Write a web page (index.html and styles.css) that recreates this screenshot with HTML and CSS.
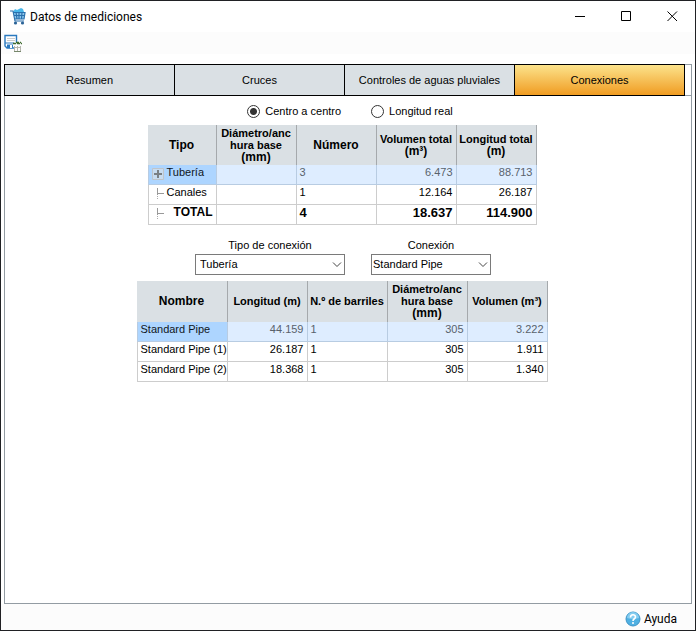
FILE: index.html
```html
<!DOCTYPE html>
<html lang="es">
<head>
    <meta charset="UTF-8">
    <meta name="viewport" content="width=device-width, initial-scale=1.0">
    <title>Datos de mediciones</title>
    <link rel="stylesheet" href="styles.css">
</head>
<body>
    <div class="window">
        <header class="titlebar">
            <svg class="app-icon" width="18" height="18" viewBox="0 0 18 18" fill="none">
                <path d="M4 4 L6 1 L8 2 L12 0 L14 1 L15 4 Z" fill="#49b7ea"/>
                <path d="M4 4 H16 L15 11 H6 Z" fill="#8cc6ec"/>
                <path d="M1 3 H4 L6 13 H15 M4 4.500 H16 L15 11 H6 M5 7.500 H16 M7 4 L8 11 M10 4 V11 M13 4 L12.500 11" stroke="#2a70ad" stroke-width="1.200"/>
                <circle cx="6.500" cy="15" r="1.600" fill="#2b6397"/>
                <circle cx="13.500" cy="15" r="1.600" fill="#2b6397"/>
            </svg>
            <h1>Datos de mediciones</h1>
            <div class="window-buttons">
                <button type="button" aria-label="Minimizar">
                    <svg width="11" height="11" viewBox="0 0 11 11"><path d="M0 5.500H10" stroke="#000"/></svg>
                </button>
                <button type="button" aria-label="Maximizar">
                    <svg width="11" height="11" viewBox="0 0 11 11"><path d="M.5.5H9.500V9.500H.5Z" fill="none" stroke="#000"/></svg>
                </button>
                <button type="button" aria-label="Cerrar">
                    <svg width="11" height="11" viewBox="0 0 11 11"><path d="M.5.5L10 10M10 .5L.5 10" stroke="#000"/></svg>
                </button>
            </div>
        </header>

        <div class="toolbar">
            <button type="button" aria-label="Guardar">
                <svg width="18" height="19" viewBox="0 0 18 19" fill="none">
                    <path d="M1 1.500H12.500V14H3L1 12Z" fill="#fff" stroke="#2a79bf" stroke-width="1.400"/>
                    <path d="M3 4.500H11M3 6.500H11" stroke="#ccc"/>
                    <path d="M1 8.500H12V9.500H1Z" fill="#2a79bf"/>
                    <path d="M3 10.500H9V14H3Z" fill="#2a79bf"/>
                    <path d="M6 11H8V14H6Z" fill="#fff"/>
                    <path d="M10 8H18V19H10Z" fill="#fcfcfc"/>
                    <path d="M9 9.500H18M12 8.500H17" stroke="#3f6b2f" stroke-width="1.500" stroke-dasharray="3 1"/>
                    <path d="M10.500 12V17.500H16.500V12M13.500 12V17M10 13.500H17" stroke="#b5b5ad"/>
                    <path d="M10 17.500H17" stroke="#76876b"/>
                </svg>
            </button>
        </div>

        <main class="tab-control">
            <nav class="tabs" role="tablist">
                <button type="button" role="tab">Resumen</button>
                <button type="button" role="tab">Cruces</button>
                <button type="button" role="tab">Controles de aguas pluviales</button>
                <button type="button" role="tab" class="active" aria-selected="true">Conexiones</button>
            </nav>

            <section class="panel">
                <div class="radios">
                    <label><input type="radio" name="longitud" checked>Centro a centro</label>
                    <label><input type="radio" name="longitud">Longitud real</label>
                </div>

                <table class="grid">
                    <colgroup><col class="col-tipo"><col><col><col><col></colgroup>
                    <thead>
                        <tr>
                            <th class="big">Tipo</th>
                            <th>Diámetro/anc<br>hura base<br><span class="big">(mm)</span></th>
                            <th class="big">Número</th>
                            <th>Volumen total<br><span class="big">(m³)</span></th>
                            <th>Longitud total<br><span class="big">(m)</span></th>
                        </tr>
                    </thead>
                    <tbody>
                        <tr class="selected">
                            <td>
                                <div class="tree">
                                    <svg width="13" height="13" viewBox="0 0 13 13" fill="none"><path d="M.5 1.500H11.500V12.500H.5Z" fill="#c8dcf0" stroke="#bfc4ca"/><path d="M2 7H10M6 3V11" stroke="#7b8084" stroke-width="2"/></svg>
                                    Tubería
                                </div>
                            </td>
                            <td></td>
                            <td>3</td>
                            <td class="num">6.473</td>
                            <td class="num">88.713</td>
                        </tr>
                        <tr>
                            <td>
                                <div class="tree">
                                    <svg width="13" height="13" viewBox="0 0 13 13" fill="none"><path d="M5.500 1V8M5.500 6.500H12" stroke="#999"/><path d="M5.500 9V12" stroke="#aaa" stroke-dasharray="1 1"/></svg>
                                    Canales
                                </div>
                            </td>
                            <td></td>
                            <td>1</td>
                            <td class="num">12.164</td>
                            <td class="num">26.187</td>
                        </tr>
                        <tr class="total">
                            <td>
                                <div class="tree">
                                    <svg width="13" height="13" viewBox="0 0 13 13" fill="none"><path d="M5.500 1V8M5.500 6.500H12" stroke="#999"/><path d="M5.500 9V12" stroke="#aaa" stroke-dasharray="1 1"/></svg>
                                    <span>TOTAL</span>
                                </div>
                            </td>
                            <td></td>
                            <td>4</td>
                            <td class="num">18.637</td>
                            <td class="num">114.900</td>
                        </tr>
                    </tbody>
                </table>

                <div class="filters">
                    <div class="field field-tipo">
                        <label for="tipo">Tipo de conexión</label>
                        <div class="select">
                            <select id="tipo"><option>Tubería</option></select>
                            <svg width="10" height="6" viewBox="0 0 10 6"><path d="M1 .5L5 4.500L9 .5" fill="none" stroke="#444"/></svg>
                        </div>
                    </div>
                    <div class="field field-conexion">
                        <label for="conexion">Conexión</label>
                        <div class="select">
                            <select id="conexion"><option>Standard Pipe</option></select>
                            <svg width="10" height="6" viewBox="0 0 10 6"><path d="M1 .5L5 4.500L9 .5" fill="none" stroke="#444"/></svg>
                        </div>
                    </div>
                </div>

                <table class="grid grid-detalle">
                    <colgroup><col class="col-nombre"><col><col><col><col></colgroup>
                    <thead>
                        <tr>
                            <th class="big">Nombre</th>
                            <th>Longitud (m)</th>
                            <th>N.º de barriles</th>
                            <th>Diámetro/anc<br>hura base<br><span class="big">(mm)</span></th>
                            <th>Volumen (m³)</th>
                        </tr>
                    </thead>
                    <tbody>
                        <tr class="selected">
                            <td>Standard Pipe</td>
                            <td class="num">44.159</td>
                            <td>1</td>
                            <td class="num">305</td>
                            <td class="num">3.222</td>
                        </tr>
                        <tr>
                            <td>Standard Pipe (1)</td>
                            <td class="num">26.187</td>
                            <td>1</td>
                            <td class="num">305</td>
                            <td class="num">1.911</td>
                        </tr>
                        <tr>
                            <td>Standard Pipe (2)</td>
                            <td class="num">18.368</td>
                            <td>1</td>
                            <td class="num">305</td>
                            <td class="num">1.340</td>
                        </tr>
                    </tbody>
                </table>
            </section>
        </main>

        <footer class="statusbar">
            <button type="button">
                <svg width="16" height="16" viewBox="0 0 16 16" fill="none">
                    <circle cx="8" cy="8" r="7" fill="#4fb0e2" stroke="#3f94c6"/>
                    <path d="M2 7A6 6 0 0 1 14 7Q8 9 2 7Z" fill="#85cdf0"/>
                    <path d="M5.500 6.500C5.500 3 10.500 3 10.500 6C10.500 8 8 7.500 8 10" stroke="#fff" stroke-width="1.600"/>
                    <circle cx="8" cy="12" r="1" fill="#fff"/>
                </svg>
                Ayuda
            </button>
        </footer>
    </div>
</body>
</html>
```

FILE: styles.css
```css
*{
    margin: 0;
    padding: 0;
    box-sizing: border-box;
}
body{
    font-family: "Liberation Sans", Arial, sans-serif;
    font-size: 11px;
    color: #000;
    background-color: #fff;
}
button{
    border: none;
    background: none;
    font: inherit;
    color: inherit;
}
svg{
    display: block;
    flex-shrink: 0;
}
.window{
    min-height: 100vh;
    display: flex;
    flex-direction: column;
    border: 1px solid #202124;
}
/* Title bar */
.titlebar{
    height: 31px;
    display: flex;
    align-items: center;
    padding-left: 8px;
}
.titlebar h1{
    flex: 1;
    margin-left: 3px;
    font-family: Roboto, "Noto Sans", sans-serif;
    font-size: 12px;
    font-weight: 400;
}
.window-buttons{
    display: flex;
}
.window-buttons button{
    width: 46px;
    height: 30px;
    display: flex;
    justify-content: center;
    align-items: center;
}
.toolbar{
    height: 22px;
    padding-left: 3px;
    background-color: #fcfcfc;
}
.toolbar button{
    margin-top: 2px;
}
/* Tabs */
.tab-control{
    flex: 1;
    display: flex;
    flex-direction: column;
    margin: 10px 3px 0;
    border: 1px solid #939ca3;
}
.tabs{
    display: flex;
    margin: -1px 0 0 -1px;
    padding-right: 6px;
    border-bottom: 1px solid #939ca3;
}
.tabs button{
    flex: 1 0 0;
    height: 32px;
    margin-bottom: -1px;
    border: 1px solid #000;
    background-color: #dae0e4;
}
.tabs button + button{
    border-left: none;
}
.tabs .active{
    background: linear-gradient(#fce38c, #f09c22);
}
.panel{
    flex: 1;
    display: flex;
    flex-direction: column;
    align-items: center;
    padding: 8px 12px 0 0;
}
.radios{
    display: flex;
    gap: 30px;
    margin-left: 16px;
}
.radios label{
    display: flex;
    align-items: center;
    gap: 5px;
    height: 14px;
}
.radios input{
    appearance: none;
    width: 13px;
    height: 13px;
    border: 1px solid #333;
    border-radius: 50%;
}
.radios input:checked{
    background: radial-gradient(circle, #333 3px, #fff 4px);
}
/* Data grids */
.grid{
    width: 1px;
    margin-top: 7px;
    table-layout: fixed;
    border-collapse: separate;
    border-spacing: 0;
}
.grid col{
    width: 80px;
}
.grid .col-tipo{
    width: 69px;
}
.grid .col-nombre{
    width: 91px;
}
.grid th{
    height: 40px;
    padding-bottom: 1px;
    border-right: 1px solid #a5a9ac;
    background-color: #dae0e4;
    line-height: 12px;
    white-space: nowrap;
}
.grid-detalle{
    margin-top: 6px;
}
.grid-detalle th{
    height: 41px;
}
.grid .big{
    font-size: 12px;
}
.grid td{
    height: 20px;
    padding: 0 3px 4px;
    border-right: 1px solid #cdcdcd;
    border-bottom: 1px solid #cdcdcd;
    line-height: 15px;
    white-space: nowrap;
}
.grid td:first-child{
    border-left: 1px solid #cdcdcd;
}
.grid .num{
    text-align: right;
}
.grid .selected td{
    border-color: #b8cce2;
    background-color: #deedff;
    color: #59626c;
}
.grid .selected td:first-child{
    background-color: #add5ff;
    color: #10151c;
}
.grid .total td{
    font-size: 13px;
    font-weight: 700;
}
.tree{
    height: 15px;
    display: flex;
    gap: 2px;
}
.tree svg{
    margin-top: 2px;
}
.total .tree{
    justify-content: space-between;
}
.tree span{
    font-size: 12px;
}
/* Filters */
.filters{
    display: flex;
    gap: 26px;
    margin-top: 12px;
    margin-left: 2px;
}
.field{
    text-align: center;
}
.field-tipo{
    width: 150px;
}
.field-conexion{
    width: 120px;
}
.field label{
    display: block;
    margin-bottom: 1px;
    line-height: 16px;
}
.select{
    position: relative;
}
.select select{
    display: block;
    width: 100%;
    height: 21px;
    padding: 0 0 1px 4px;
    appearance: none;
    border: 1px solid #7a7a7a;
    border-radius: 0;
    background-color: #fff;
    font: inherit;
    color: #000;
}
.field-conexion select{
    padding-left: 1px;
}
.select svg{
    position: absolute;
    top: 8px;
    right: 3px;
    pointer-events: none;
}
/* Status bar */
.statusbar{
    height: 26px;
    display: flex;
    justify-content: flex-end;
    align-items: center;
    padding: 4px 18px 0 0;
    background-color: #fcfcfc;
    font-family: Roboto, "Noto Sans", sans-serif;
    font-size: 12px;
}
.statusbar button{
    display: flex;
    align-items: center;
    gap: 3px;
}
```
